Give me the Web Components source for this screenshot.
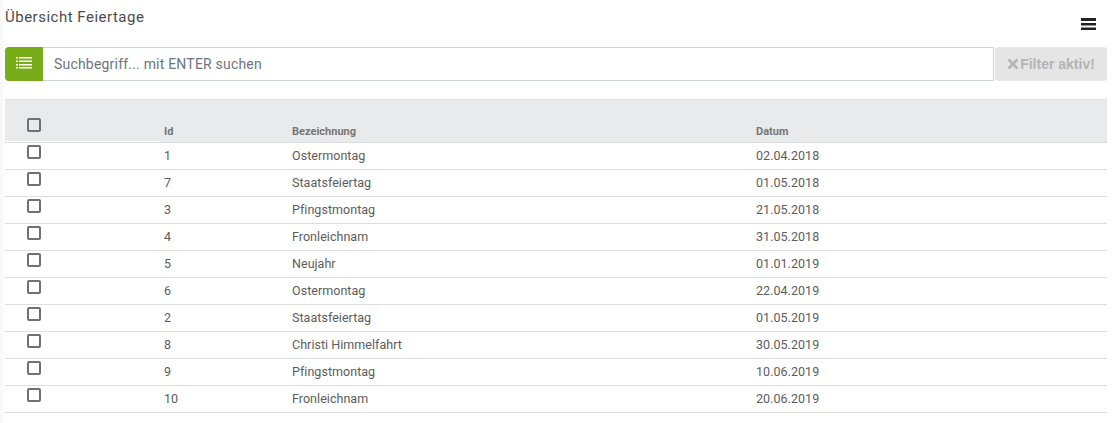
<!DOCTYPE html>
<html>
<head>
<meta charset="utf-8">
<style>
	html,body{margin:0;padding:0;background:#fff}
	body{font-family:Roboto,"Liberation Sans",sans-serif;color:#555}
</style>
</head>
<body>
<holiday-page heading="Übersicht Feiertage">
	<holiday-toolbar></holiday-toolbar>
	<holiday-table>
		<holiday-row num="1" name="Ostermontag" date="02.04.2018"></holiday-row>
		<holiday-row num="7" name="Staatsfeiertag" date="01.05.2018"></holiday-row>
		<holiday-row num="3" name="Pfingstmontag" date="21.05.2018"></holiday-row>
		<holiday-row num="4" name="Fronleichnam" date="31.05.2018"></holiday-row>
		<holiday-row num="5" name="Neujahr" date="01.01.2019"></holiday-row>
		<holiday-row num="6" name="Ostermontag" date="22.04.2019"></holiday-row>
		<holiday-row num="2" name="Staatsfeiertag" date="01.05.2019"></holiday-row>
		<holiday-row num="8" name="Christi Himmelfahrt" date="30.05.2019"></holiday-row>
		<holiday-row num="9" name="Pfingstmontag" date="10.06.2019"></holiday-row>
		<holiday-row num="10" name="Fronleichnam" date="20.06.2019"></holiday-row>
	</holiday-table>
</holiday-page>
<script>
class HolidayPage extends HTMLElement{
	constructor(){
		super()
		let shadowRoot = this.attachShadow({mode: 'open'})
		shadowRoot.innerHTML = `
			<style>
				:host{display:block;padding:0 7px 0 5px;height:423px;box-sizing:border-box;overflow:hidden;background:linear-gradient(90deg,#f6f6f6,#fcfcfc 4px,#fff 5px)}
				header{display:flex;justify-content:space-between;height:47px}
				h1{margin:9px 0 0;font-size:15px;font-weight:400;line-height:17px;letter-spacing:.5px;color:#4c4c4c}
				svg{display:block;margin:18px 11px 0 0}
			</style>
			<header>
				<h1>${this.getAttribute("heading")}</h1>
				<svg width="15" height="12" viewBox="0 0 15 12"><path d="M0 0h15v3H0zM0 5h15v2.500H0zM0 9.500h15V12H0z" fill="#222"/></svg>
			</header>
			<slot></slot>
		`
	}
}
class HolidayToolbar extends HTMLElement{
	constructor(){
		super()
		let shadowRoot = this.attachShadow({mode: 'open'})
		shadowRoot.innerHTML = `
			<style>
				:host{display:flex;height:34px;margin-bottom:18px}
				.menu{width:38px;background:#78ac19;border-radius:4px 0 0 4px;display:flex;align-items:center;justify-content:center;padding-bottom:3px;box-sizing:border-box}
				.search{flex:1;border:1px solid #ced4da;border-left:0;display:flex;align-items:center;padding:0 11px;font-size:14px;letter-spacing:.2px;color:#6c757d;box-sizing:border-box;background:#fff}
				.filter{width:112px;background:#e5e5e5;border-radius:4px;display:flex;align-items:center;justify-content:center;gap:1px;font:700 14px "Liberation Sans",Arial,sans-serif;color:#b4b4b4;margin-left:1px}
			</style>
			<div class="menu">
				<svg width="16" height="13" viewBox="0 0 16 13" fill="#fff"><path d="M0 1h2v1.500H0zM3 1h13v1.500H3zM0 4.500h2V6H0zM3 4.500h13V6H3zM0 8h2v1.500H0zM3 8h13v1.500H3zM0 11h2v1.500H0zM3 11h13v1.500H3z"/></svg>
			</div>
			<div class="search">Suchbegriff... mit ENTER suchen</div>
			<div class="filter">
				<svg width="12" height="12" viewBox="0 0 12 12"><path d="M1.500 1.500l9 9M10.500 1.500l-9 9" stroke="#b4b4b4" stroke-width="2.600" fill="none"/></svg>
				<span>Filter aktiv!</span>
			</div>
		`
	}
}
class HolidayTable extends HTMLElement{
	constructor(){
		super()
		let shadowRoot = this.attachShadow({mode: 'open'})
		shadowRoot.innerHTML = `
			<style>
				:host{display:block;font-size:12.500px;letter-spacing:.04px;background:#fff}
				.head{display:grid;grid-template-columns:155px 132px 464px 1fr;height:44px;background:#e9eaec;border-top:1px solid #e2e3e6;box-sizing:border-box;font-size:11px;font-weight:700;color:#757575;letter-spacing:0;border-bottom:1px solid #dcdde0}
				.head span{align-self:end;padding-bottom:4px}
				.head span:first-of-type{padding-left:4px}
				.first{border-bottom:1px solid #fff;box-sizing:border-box}
				.check{width:10px;height:10px;border:2px solid #707070;border-radius:2px;margin:18px 0 0 22px}
			</style>
			<div class="head">
				<div class="first"><div class="check"></div></div>
				<span>Id</span><span>Bezeichnung</span><span>Datum</span>
			</div>
			<slot></slot>
		`
	}
}
class HolidayRow extends HTMLElement{
	constructor(){
		super()
		let shadowRoot = this.attachShadow({mode: 'open'})
		shadowRoot.innerHTML = `
			<style>
				:host{display:grid;grid-template-columns:159px 128px 464px 1fr;height:27px;border-bottom:1px solid #dedede;box-sizing:border-box;align-items:center}
				.check{width:10px;height:10px;border:2px solid #707070;border-radius:2px;margin:0 0 9px 22px}
				span{color:#5c5c5c;padding-bottom:1px}
			</style>
			<div><div class="check"></div></div>
			<span>${this.getAttribute("num")}</span>
			<span>${this.getAttribute("name")}</span>
			<span>${this.getAttribute("date")}</span>
		`
	}
}
customElements.define("holiday-page", HolidayPage)
customElements.define("holiday-toolbar", HolidayToolbar)
customElements.define("holiday-table", HolidayTable)
customElements.define("holiday-row", HolidayRow)
</script>
</body>
</html>
